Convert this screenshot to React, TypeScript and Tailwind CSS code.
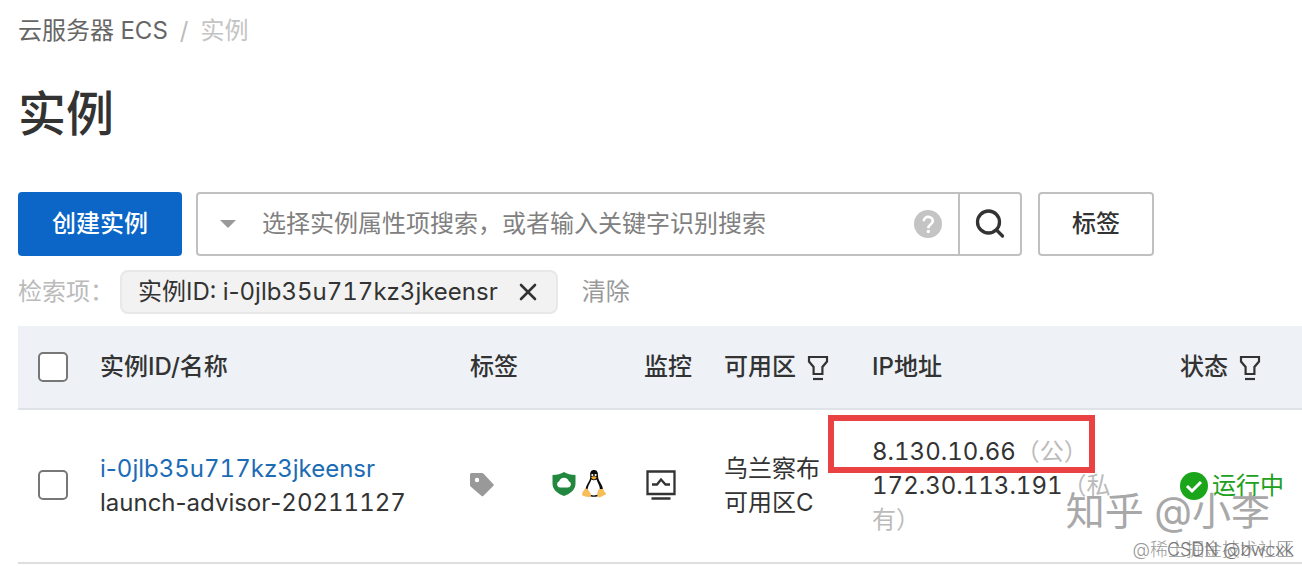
import { Fragment, type ReactNode } from 'react'
import { X } from 'lucide-react'

interface Instance {
  id: string
  name: string
  zone: string[]
  publicIp: string
  privateIp: string
  status: string
}

const instances: Instance[] = [
  {
    id: 'i-0jlb35u717kz3jkeensr',
    name: 'launch-advisor-20211127',
    zone: ['乌兰察布', '可用区C'],
    publicIp: '8.130.10.66',
    privateIp: '172.30.113.191',
    status: '运行中',
  },
]

// tabular digits, but the hyphens keep their own width
function Slug({ text }: { text: string }) {
  return (
    <>
      {text.split('-').map((part, i) => (
        <Fragment key={i}>
          {i > 0 && <span className="normal-nums">-</span>}
          {part}
        </Fragment>
      ))}
    </>
  )
}

function FilterIcon() {
  return (
    <svg width="24" height="28" viewBox="0 0 24 28" fill="none" stroke="#333" strokeWidth="2.2" aria-hidden="true">
      <path d="M3 4h18v4.500l-4.600 5.500v7H7.600v-7L3 8.500z" />
      <path d="M7 26h10" />
    </svg>
  )
}

function SearchIcon() {
  return (
    <svg width="30" height="30" viewBox="0 0 30 30" fill="none" stroke="#333" strokeWidth="3.300" strokeLinecap="round" aria-hidden="true">
      <circle cx="13.500" cy="13" r="11" />
      <path d="M21.500 21l6 6" />
    </svg>
  )
}

function TagIcon() {
  return (
    <svg width="24" height="24" viewBox="0 0 24 24" aria-hidden="true">
      <path
        fill="#999"
        fillRule="evenodd"
        d="M1.500 0H12a2 2 0 0 1 1.400.6l10 10.700a1 1 0 0 1 0 1.400L13.200 23a1.200 1.200 0 0 1-1.600 0L.6 13.500A2 2 0 0 1 0 12V1.500A1.500 1.500 0 0 1 1.500 0zM7 4.800a2.200 2.200 0 1 0 0 4.400 2.200 2.200 0 0 0 0-4.400z"
      />
    </svg>
  )
}

function ShieldIcon() {
  return (
    <svg width="24" height="24" viewBox="0 0 24 24" aria-hidden="true">
      <path fill="#23883f" d="M12 0c3 2 7 3 11.500 3v8.500c0 6-5 10.200-11.500 12.500C5.500 21.700.5 17.500.5 11.500V3C5 3 9 2 12 0z" />
      <path fill="#fff" d="M8 15.500a3.200 3.200 0 0 1-.8-6.200 5 5 0 0 1 9.600 0 3.200 3.200 0 0 1-.8 6.200z" />
    </svg>
  )
}

function LinuxIcon() {
  return (
    <svg width="24" height="28" viewBox="0 0 24 28" aria-hidden="true">
      <path
        fill="#0c0c0c"
        d="M12 0C9 0 8 2.200 8.200 5c.2 3.200-.2 4.800-1.800 7.200C4.600 15 3.400 18 3.400 21c0 3 3.400 5.800 8.600 5.800s9.200-2.800 9.200-5.800c0-3.200-1.400-6.200-3.200-9-1.600-2.600-2-4.200-2-7 0-2.800-1-5-4-5z"
      />
      <path fill="#fff" d="M9.300 9.500C8.800 12.500 5.600 15.600 5.600 20c0 3.600 2.800 5.400 6.200 5.400 3.600 0 6.200-1.800 6.200-5.400 0-4.400-2.600-7.500-3.500-10.500-1.500 1-3.700 1-5.200 0z" />
      <circle cx="10.300" cy="5" r="1.100" fill="#fff" />
      <circle cx="13.600" cy="5" r="1.100" fill="#fff" />
      <path fill="#f0a92a" d="M9 7.200c1.500-1.400 4.300-1.400 5.800 0-1.200 1.600-1.900 2.200-2.900 2.200S9.900 8.800 9 7.200z" />
      <path
        fill="#f8be5a"
        d="M4 18.500c1.700 0 3.700 3.300 4.800 5.300.9 2-.6 3.500-2.800 3.200-2-.3-3.700-.8-5-1.200-1-.3-1.200-1-.8-2.200.3-1 .2-2.200 1.200-2.700 1-.4.900-2.400 2.600-2.400zM20.400 18.700c1.200 0 .9 2 1.900 2.700.9.8 1.700 1.500 1.700 2.300 0 1.300-3 1.700-4.300 2.900-1.500 1.300-4.500.8-4.500-1.600 0-2 .5-5 1.900-5.800 1-.6 2.300.1 3.300-.5z"
      />
    </svg>
  )
}

function MonitorIcon() {
  return (
    <svg width="30" height="30" viewBox="0 0 30 30" fill="none" stroke="#333" strokeWidth="2.300" aria-hidden="true">
      <path d="M1.500 1.500h27v22.500h-27zM5.500 28.500h19" />
      <path d="M6 14.500h5l4-5 4.500 5H24" />
    </svg>
  )
}

function HelpIcon() {
  return (
    <svg width="28" height="28" viewBox="0 0 28 28" fill="none" aria-hidden="true">
      <circle cx="14" cy="14" r="14" fill="#c4c4c4" />
      <path stroke="#fff" strokeWidth="2.600" d="M9.800 11.200c0-6 9-5.600 9 0 0 3-4.500 3.200-4.500 7" />
      <circle cx="14.300" cy="21.500" r="1.700" fill="#fff" />
    </svg>
  )
}

function RunningIcon() {
  return (
    <svg width="28" height="28" viewBox="0 0 28 28" fill="none" aria-hidden="true">
      <circle cx="14" cy="14" r="14" fill="#1aa51a" />
      <path stroke="#fff" strokeWidth="3" d="M7 14l5 5 9-9" />
    </svg>
  )
}

function Checkbox({ label }: { label: string }) {
  return (
    <input
      type="checkbox"
      aria-label={label}
      className="block size-[30px] appearance-none rounded-[5px] border-2 border-[#777] bg-white checked:bg-[#0b66c8]"
    />
  )
}

function HeadCell({ children, filter }: { children: ReactNode; filter?: boolean }) {
  return (
    <th className="p-0 text-left font-medium">
      <div className="flex items-center gap-2.5">
        {children}
        {filter && (
          <button type="button" aria-label="筛选">
            <FilterIcon />
          </button>
        )}
      </div>
    </th>
  )
}

export default function App() {
  return (
    <main className="relative overflow-hidden bg-white pt-3.5 pl-[18px] font-['Inter','Noto_Sans_CJK_SC',sans-serif] text-2xl leading-[34px] text-[#333] tabular-nums">
      <nav className="flex gap-3">
        <a href="#ecs" className="text-[#666]">云服务器 ECS</a>
        <span className="text-[#bbb]">/</span>
        <span className="text-[#c4c4c4]">实例</span>
      </nav>

      <h1 className="mt-8 text-5xl leading-[68px] font-medium">实例</h1>

      <div className="mt-11 mr-[148px] flex h-16">
        <button type="button" className="w-[164px] shrink-0 rounded bg-[#0b66c8] font-medium text-white">
          创建实例
        </button>
        <form className="ml-3.5 flex min-w-0 grow rounded border-2 border-[#c0c0c0]" role="search">
          <div className="flex min-w-0 grow items-center pr-4 pl-[22px]">
            <button type="button" aria-label="选择属性">
              <svg width="16" height="8" viewBox="0 0 16 8" aria-hidden="true">
                <path fill="#999" d="M0 0h16L8 8z" />
              </svg>
            </button>
            <input
              type="text"
              aria-label="搜索实例"
              placeholder="选择实例属性项搜索，或者输入关键字识别搜索"
              className="ml-[26px] min-w-0 grow outline-none placeholder:text-[#808080]"
            />
            <button type="button" aria-label="帮助">
              <HelpIcon />
            </button>
          </div>
          <button type="submit" aria-label="搜索" className="flex w-[62px] items-center justify-center border-l-2 border-[#c0c0c0]">
            <SearchIcon />
          </button>
        </form>
        <button type="button" className="ml-4 w-[116px] shrink-0 rounded border-2 border-[#c0c0c0] font-medium">
          标签
        </button>
      </div>

      <div className="mt-3.5 flex h-11 items-center">
        <span className="w-[102px] text-[#bbb]">检索项：</span>
        <div className="flex h-11 items-center gap-4 rounded-lg border-2 border-[#e8e8e8] bg-[#f2f2f2] pr-3.5 pl-4">
          <span>
            实例ID: <Slug text="i-0jlb35u717kz3jkeensr" />
          </span>
          <button type="button" aria-label="移除">
            <X size={28} strokeWidth={2.25} />
          </button>
        </div>
        <button type="button" className="ml-6 text-[#999]">清除</button>
      </div>

      <table className="mt-3 w-full table-fixed border-collapse">
        <colgroup>
          <col className="w-[82px]" />
          <col className="w-[370px]" />
          <col className="w-[82px]" />
          <col className="w-[92px]" />
          <col className="w-20" />
          <col className="w-[148px]" />
          <col className="w-[308px]" />
          <col />
        </colgroup>
        <thead className="border-b-2 border-[#dfe2e6] bg-[#eef2f7]">
          <tr className="h-[83px]">
            <th className="p-0 pl-5">
              <Checkbox label="全选" />
            </th>
            <HeadCell>实例ID/名称</HeadCell>
            <HeadCell>标签</HeadCell>
            <th className="p-0" />
            <HeadCell>监控</HeadCell>
            <HeadCell filter>可用区</HeadCell>
            <HeadCell>IP地址</HeadCell>
            <HeadCell filter>状态</HeadCell>
          </tr>
        </thead>
        <tbody>
          {instances.map((item) => (
            <tr key={item.id} className="h-[154px] border-b-2 border-[#dedede]">
              <td className="p-0 pb-0.5 pl-5">
                <Checkbox label={item.name} />
              </td>
              <td className="p-0">
                <a href={`#${item.id}`} className="text-[#1c6cb5]">
                  <Slug text={item.id} />
                </a>
                <div>
                  <Slug text={item.name} />
                </div>
              </td>
              <td className="p-0 pb-0.5">
                <TagIcon />
              </td>
              <td className="p-0 pb-1">
                <div className="flex items-center gap-1.5">
                  <ShieldIcon />
                  <LinuxIcon />
                </div>
              </td>
              <td className="p-0 pb-0.5 pl-0.5">
                <MonitorIcon />
              </td>
              <td className="p-0">
                {item.zone.map((line) => (
                  <div key={line}>{line}</div>
                ))}
              </td>
              <td className="p-0">
                <div className="relative w-60">
                  <div>
                    {item.publicIp}
                    <span className="text-[#bbb]">（公）</span>
                  </div>
                  <div>
                    {item.privateIp}
                    <span className="text-[#bbb]">（私有）</span>
                  </div>
                  <div className="absolute -top-5 -left-11 h-[58px] w-[267px] border-6 border-[#ea4242]" />
                </div>
              </td>
              <td className="p-0">
                <div className="flex items-center gap-1 whitespace-nowrap text-[#20a020]">
                  <RunningIcon />
                  {item.status}
                </div>
              </td>
            </tr>
          ))}
        </tbody>
      </table>

      <div className="pointer-events-none absolute right-8 bottom-9 text-[39px] text-[#a8a8a8] text-shadow-[1px_1px_0_#fff]">
        知乎 @小李
      </div>
      <div className="pointer-events-none absolute right-2 bottom-0 text-lg leading-7 font-light text-[#999]">@稀土掘金技术社区</div>
      <div className="pointer-events-none absolute right-2 bottom-0 text-lg leading-7 font-light text-[#777]">CSDN @bwcxk</div>
    </main>
  )
}
